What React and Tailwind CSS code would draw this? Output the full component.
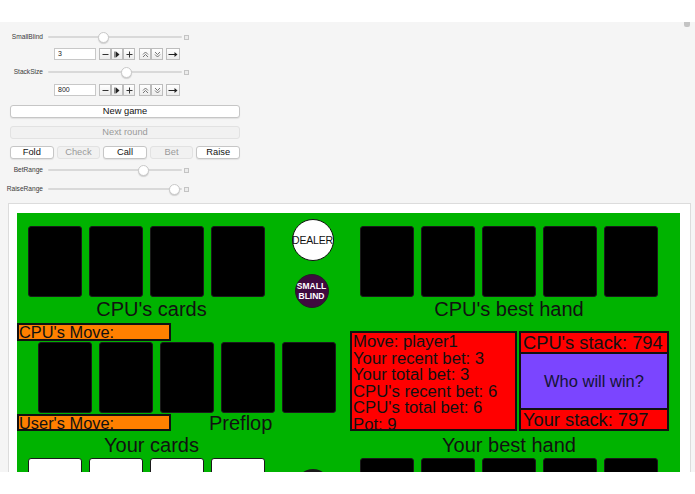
import React from "react";

function Card({ white }) {
  return (
    <div
      className={
        "w-[54px] h-[71px] rounded-[3px] border border-[#1a1a1a] " +
        (white ? "bg-white" : "bg-black")
      }
    />
  );
}

function Slider({ label, knob }) {
  return (
    <div className="flex items-center h-[12px]">
      <div className="w-[44px] text-right text-[6.6px] leading-[8px] text-[#3a3a3a] pr-[1px]">{label}</div>
      <div className="relative w-[134px] h-[12px] ml-[4px] flex items-center">
        <div className="w-full h-[2px] rounded-full bg-[#d9d9d9]" />
        <div
          className="absolute top-[0.5px] w-[11px] h-[11px] rounded-full bg-white border border-[#c9c9c9] shadow-[0_1px_1px_rgba(0,0,0,0.15)]"
          style={{ left: knob - 48 - 5.5 }}
        />
      </div>
      <div className="ml-[2px] w-[5px] h-[5px] border border-[#c4c4c4] bg-[#ececec]" />
    </div>
  );
}

function SmallBtn({ children, w = "w-[12px]" }) {
  return (
    <div className={w + " h-[12px] flex items-center justify-center bg-gradient-to-b from-white to-[#ececec] border border-[#bdbdbd]"}>
      {children}
    </div>
  );
}

function InputRow({ value }) {
  return (
    <div className="flex items-center h-[12px] pl-[54px]">
      <div className="w-[42px] h-[12px] bg-white border border-[#c8c8c8] text-[7px] leading-[10px] pl-[3px] text-[#222]">
        {value}
      </div>
      <div className="flex ml-[3px]">
        <SmallBtn>
          <svg width="7" height="7" viewBox="0 0 7 7"><path d="M0.5 3.5H6.5" stroke="#333" strokeWidth="1" /></svg>
        </SmallBtn>
        <SmallBtn>
          <svg width="7" height="7" viewBox="0 0 7 7"><path d="M1 0.5V6.5" stroke="#222" strokeWidth="1" /><path d="M2 0.5L5.5 3.5L2 6.5Z" fill="#222" /></svg>
        </SmallBtn>
        <SmallBtn>
          <svg width="7" height="7" viewBox="0 0 7 7"><path d="M0.5 3.5H6.5M3.5 0.5V6.5" stroke="#333" strokeWidth="1" /></svg>
        </SmallBtn>
      </div>
      <div className="flex ml-[4px]">
        <SmallBtn>
          <svg width="7" height="7" viewBox="0 0 7 7"><path d="M1 3.5L3.5 1L6 3.5M1 6L3.5 3.5L6 6" stroke="#555" strokeWidth="0.8" fill="none" /></svg>
        </SmallBtn>
        <SmallBtn>
          <svg width="7" height="7" viewBox="0 0 7 7"><path d="M1 1L3.5 3.5L6 1M1 3.5L3.5 6L6 3.5" stroke="#555" strokeWidth="0.8" fill="none" /></svg>
        </SmallBtn>
      </div>
      <div className="ml-[3px]">
        <SmallBtn w="w-[14px]">
          <svg width="10" height="7" viewBox="0 0 10 7"><path d="M0.5 3.5H7" stroke="#222" strokeWidth="1" /><path d="M6.5 1L9.5 3.5L6.5 6Z" fill="#222" /></svg>
        </SmallBtn>
      </div>
    </div>
  );
}

function Btn({ children, disabled, className = "" }) {
  return (
    <div
      className={
        "h-[13px] rounded-[3px] border flex items-center justify-center text-[9.3px] leading-[11px] " +
        (disabled
          ? "bg-[#f1f1f1] border-[#e2e2e2] text-[#9a9a9a] "
          : "bg-white border-[#c6c6c6] text-[#111] shadow-[0_1px_1px_rgba(0,0,0,0.08)] ") +
        className
      }
    >
      {children}
    </div>
  );
}

function MoveBox({ children, h }) {
  return (
    <div className={"w-[154px] " + h + " bg-[#ff8000] border-2 border-[#111] text-[16.4px] leading-[15px] text-[#111] overflow-hidden whitespace-nowrap"}>
      {children}
    </div>
  );
}

export default function App() {
  return (
    <div className="w-[695px] h-[494px] bg-white overflow-hidden font-['Liberation_Sans',Arial,sans-serif]">
      <div className="h-[22px]" />
      <div className="relative h-[450px] bg-[#f5f5f5] overflow-hidden">
        <div className="absolute right-[5px] top-[0px] w-[6px] h-[5px] rounded-b-[2px] bg-[#c4c4c4]" />
        <div className="flex flex-col">
          <div className="mt-[9px]"><Slider label="SmallBlind" knob={103} /></div>
          <div className="mt-[5px]"><InputRow value="3" /></div>
          <div className="mt-[6px]"><Slider label="StackSize" knob={126} /></div>
          <div className="mt-[6px]"><InputRow value="800" /></div>
          <div className="mt-[9px] pl-[10px] w-[240px]"><Btn>New game</Btn></div>
          <div className="mt-[8px] pl-[10px] w-[240px]"><Btn disabled>Next round</Btn></div>
          <div className="mt-[7px] pl-[10px] w-[240px] flex gap-[3px]">
            <Btn className="w-[44px]">Fold</Btn>
            <Btn disabled className="w-[44px]">Check</Btn>
            <Btn className="w-[44px]">Call</Btn>
            <Btn disabled className="w-[44px]">Bet</Btn>
            <Btn className="w-[44px]">Raise</Btn>
          </div>
          <div className="mt-[5px]"><Slider label="BetRange" knob={143} /></div>
          <div className="mt-[7px]"><Slider label="RaiseRange" knob={174} /></div>

          <div className="mt-[8px] ml-[8px] w-[683px] h-[300px] bg-white border border-[#dcdcdc] pt-[9px] pl-[8px]">
            <div className="w-[663px] h-[300px] bg-[#00b300] text-[#111]">
              {/* top section */}
              <div className="flex pt-[6px] pl-[11px]">
                <div className="flex flex-col pt-[7px]">
                  <div className="flex gap-[7px]">
                    <Card /><Card /><Card /><Card />
                  </div>
                  <div className="mt-[1px] pl-[10px] text-center text-[20px] leading-[22px]">CPU's cards</div>
                </div>
                <div className="w-[95px] flex flex-col items-center">
                  <div className="w-[42px] h-[42px] rounded-full bg-white border border-[#111] flex items-center justify-center text-[10.5px] leading-[12px] tracking-[-0.2px]">
                    DEALER
                  </div>
                  <div className="mt-[13px] mr-[2px] w-[34px] h-[34px] rounded-full bg-[#3f0a3f] border border-[#222] flex flex-col items-center justify-center text-white font-bold text-[8.5px] leading-[10px]">
                    <span>SMALL</span>
                    <span>BLIND</span>
                  </div>
                </div>
                <div className="flex flex-col pt-[7px]">
                  <div className="flex gap-[7px]">
                    <Card /><Card /><Card /><Card /><Card />
                  </div>
                  <div className="mt-[1px] text-center text-[20px] leading-[22px]">CPU's best hand</div>
                </div>
              </div>

              {/* middle section */}
              <div className="flex h-[111px]">
                <div className="w-[333px] flex flex-col">
                  <div className="mt-[3px]"><MoveBox h="h-[18px]">CPU's Move:</MoveBox></div>
                  <div className="mt-[1px] ml-[21px] flex gap-[7px]">
                    <Card /><Card /><Card /><Card /><Card />
                  </div>
                  <div className="flex items-start mt-[1px]">
                    <MoveBox h="h-[17px]">User's Move:</MoveBox>
                    <div className="ml-[38px] -mt-[1px] text-[20px] leading-[20px]">Preflop</div>
                  </div>
                </div>
                <div className="pt-[11px] flex gap-[2px]">
                  <div className="w-[167px] h-[100px] bg-[#ff0000] border-2 border-[#111] pl-[1px] pt-[1px] text-[16.7px] leading-[16.6px] whitespace-nowrap overflow-hidden">
                    <div>Move: player1</div>
                    <div>Your recent bet: 3</div>
                    <div>Your total bet: 3</div>
                    <div>CPU's recent bet: 6</div>
                    <div>CPU's total bet: 6</div>
                    <div>Pot: 9</div>
                  </div>
                  <div className="w-[150px] h-[100px] flex flex-col">
                    <div className="h-[23px] bg-[#ff0000] border-2 border-[#111] pl-[2px] text-[18.3px] leading-[20px] whitespace-nowrap">CPU's stack: 794</div>
                    <div className="h-[54px] bg-[#7b45ff] border-x-2 border-[#111] flex items-center justify-center text-[16.5px] text-[#141436]">Who will win?</div>
                    <div className="h-[23px] bg-[#ff0000] border-2 border-[#111] pl-[2px] text-[18.3px] leading-[20px] whitespace-nowrap">Your stack: 797</div>
                  </div>
                </div>
              </div>

              {/* bottom section */}
              <div className="flex pl-[11px]">
                <div className="flex flex-col">
                  <div className="mt-[3px] pl-[10px] text-center text-[20px] leading-[22px]">Your cards</div>
                  <div className="mt-[2px] flex gap-[7px]">
                    <Card white /><Card white /><Card white /><Card white />
                  </div>
                </div>
                <div className="w-[95px] flex flex-col items-center">
                  <div className="mt-[38px] w-[34px] h-[34px] rounded-full bg-[#1a1a1a]" />
                </div>
                <div className="flex flex-col">
                  <div className="mt-[3px] text-center text-[20px] leading-[22px]">Your best hand</div>
                  <div className="mt-[2px] flex gap-[7px]">
                    <Card /><Card /><Card /><Card /><Card />
                  </div>
                </div>
              </div>
            </div>
          </div>
        </div>
      </div>
    </div>
  );
}
